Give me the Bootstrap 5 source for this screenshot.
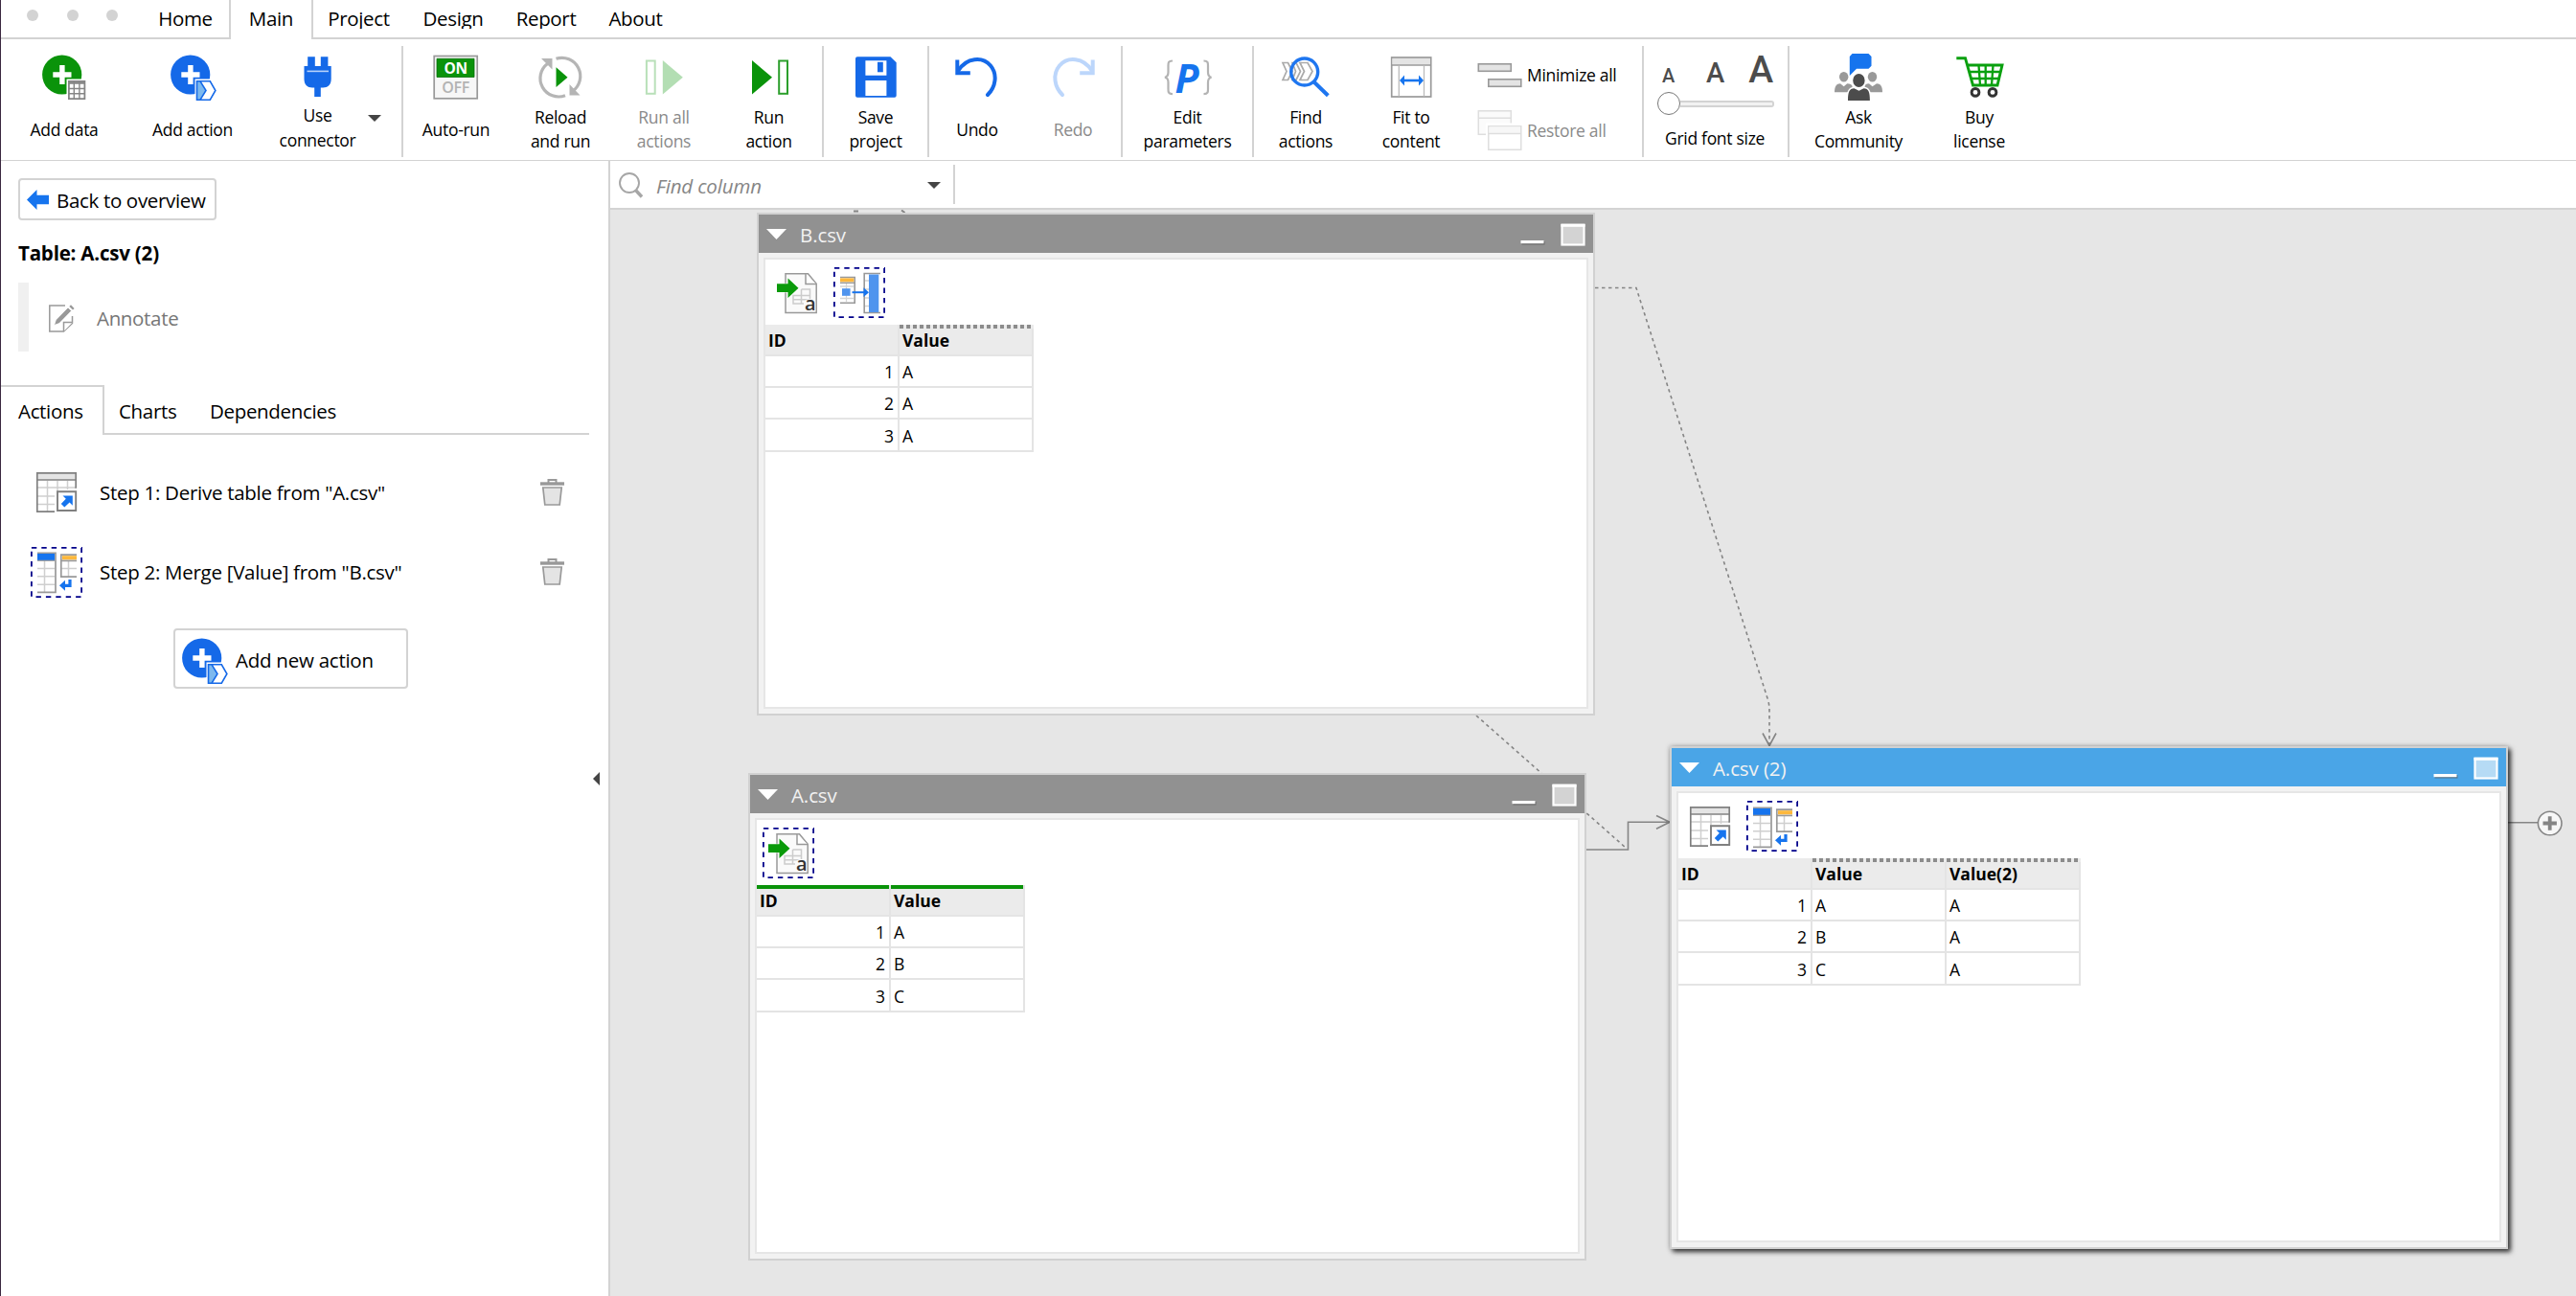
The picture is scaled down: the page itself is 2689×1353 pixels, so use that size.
<!DOCTYPE html>
<html lang="en">
<head>
<meta charset="utf-8">
<title>Project editor</title>
<link rel="stylesheet" href="https://cdn.jsdelivr.net/npm/bootstrap@5.3.0/dist/css/bootstrap.min.css">
<style>
:root{--edge:#d3d3d3}
html,body{height:100%}
body{font-family:"Open Sans","Noto Sans",sans-serif;font-size:20.5px;letter-spacing:-.33px;color:#000;line-height:30px;background:#fff;overflow:hidden}
svg{overflow:visible;flex:none}
.app{height:1353px;border-left:1px solid #3a2840}

/* top tabs */
.topbar{height:41px;flex:none}
.win-dots{width:147px;border-bottom:2px solid var(--edge);padding:10px 0 0 27px;gap:29.5px}
.win-dots i{width:12px;height:12px;border-radius:50%;background:var(--edge)}
.top-tab{border-bottom:2px solid var(--edge);text-align:center;color:#000}
.top-tab span{display:block;line-height:39px;clip-path:inset(0 0 9px 0)}
.top-tab.active{border:2px solid var(--edge);border-width:0 2px}
.tw-91{width:91px}.tw-92{width:92px}.tw-88{width:88px}.tw-95{width:95px}.tw-102{width:102px}

/* ribbon */
.ribbon{height:127px;flex:none;border-bottom:1px solid var(--edge);font-size:17.5px;letter-spacing:-.3px;line-height:25px;padding-top:7px}
.rule{width:2px;height:116px;background:var(--edge)}
.tool{text-align:center;padding-top:8px}
.tool svg{width:48px;height:48px}
.tool-label{height:62px;display:flex;align-items:center;justify-content:center}
.off{color:#8a8a8a}
.w100{width:100px}.w108{width:108px}.w110{width:110px}.w111{width:111px}.w112{width:112px}
.w132{width:132px}.w135{width:135px}.w136{width:136px}.w144{width:144px}
.w-use{width:125px}.use-lines{line-height:25.6px;padding-bottom:3px}
.caret-drop{width:0;margin:61px 35px 0 -10px}
.wins{width:185px;padding-left:13px}
.wins>div{gap:5px}
.wins span{margin-top:-4px}
.font-size-tool{width:150px;padding:9px 13px 0 19px}
.letters{height:29px;line-height:1;color:#4c4c4c;font-family:Roboto,sans-serif;font-weight:500;letter-spacing:0;width:116px}
.letters span{line-height:.86}
.l-s{font-size:20px}.l-m{font-size:29px}.l-l{font-size:39px}
.slider{height:24px;margin:10px 0 0 -5px;width:122px}
.slider b{width:24px;height:24px;border:1.5px solid #777;border-radius:50%;background:#fff}
.slider i{height:7px;flex:1;border:2px solid var(--edge);border-left:0;border-radius:0 3px 3px 0;background:#f2f2f2}
.slider-name{margin:12px 0 0 3px;white-space:nowrap}

/* side panel */
.side{width:636px;border-right:2px solid var(--edge);padding-top:18px}
.line-btn{border:2px solid var(--edge);border-radius:4px;background:#fff}
.back{width:207px;height:44px;margin-left:18px;padding:1px 0 0 7px;gap:8px}
.side-title{font-weight:700;letter-spacing:-.2px;margin:19px 0 0 18px}
.note{margin:16px 0 0 18px;height:72px;width:580px;border-left:11px solid #f0f0f0;color:#767676;padding:2px 0 0 21px;gap:23px}
.side-tabs{margin-top:35px;height:52px;width:614px}
.side-tabs>span{line-height:50px;border-bottom:2px solid var(--edge);padding-top:2px}
.side-tabs .active{width:108px;padding:0 0 0 18px;border:2px solid var(--edge);border-width:2px 2px 0 0}
.st-b{padding-left:15px;width:92px}.st-c{padding-left:18px}
.steps{margin:33px 46px 0 31px;gap:29px}
.step{height:54px}
.step-name{margin-left:18px;letter-spacing:-.28px}
.add-new{width:245px;height:63px;margin:32px 0 0 180px;padding:2px 0 0 6px;gap:9px;letter-spacing:-.25px}
.collapser{left:617px;top:638px}

/* search strip */
.find{height:51px;border-bottom:2px solid var(--edge);padding-top:4px}
.find-box{width:360px;height:41px;border-right:2px solid var(--edge);padding:1px 13px 0 9px;font-style:italic;color:#858585;letter-spacing:-.15px}
.find-box span{margin:1px 0 0 14px;flex:1}

/* canvas */
.board{background:#e6e6e6;flex:1;overflow:hidden}
.wires{left:-637px;top:-219px}
.win{position:absolute;border:2px solid #d1d1d1;background:#f2f2f2;display:flex;flex-direction:column}
.win-b{left:153px;top:3px;width:875px;height:525px}
.win-a{left:144px;top:588px;width:875px;height:509px}
.win-c{left:1106px;top:560px;width:875px;height:525px;box-shadow:3px 3px 5px rgba(0,0,0,.75),0 0 5px rgba(0,0,0,.25)}
.win-head{height:40px;background:#919191;color:#f2f2f2;padding:1px 8px 0 8px;letter-spacing:-.1px;flex:none}
.win-c .win-head{background:#4aa5e7}
.win-head .nm{margin-left:14px;padding-top:1px}
.win-body{flex:1;margin:5px;border:2px solid #e6e6e6;background:#fff}
.strip{height:68px;padding:8px 0 0 6px;gap:11px}
.cellbox{width:54px;height:53px;display:flex;align-items:center;justify-content:center}
.cellbox svg{width:48px;height:48px}
.grid{table-layout:fixed;border-collapse:separate;border-spacing:0;font-size:17.5px;letter-spacing:0;line-height:30px;width:280px}
.grid.g3{width:420px}
.grid th,.grid td{height:33px;padding:1px 2px 0 3px;border:0 solid #e4e4e4;border-width:0 2px 2px 0}
.grid tr:last-child td{padding-top:2px;height:34px}
.grid th{background:#ebebeb;position:relative}
.grid td:first-child{text-align:right;padding-right:4px}
.grid th.dots::before{content:"";position:absolute;left:0;right:-2px;top:0;height:4px;background:repeating-linear-gradient(90deg,#8c8c8c 0 4px,#ebebeb 4px 7px)}
.grid th.solid::before{content:"";position:absolute;left:0;right:0;top:0;height:4px;background:#0a930a}
</style>
<script src="https://cdn.jsdelivr.net/npm/bootstrap@5.3.0/dist/js/bootstrap.bundle.min.js"></script>
</head>
<body>
<svg width="0" height="0" class="position-absolute">
  <defs>
    <symbol id="i-addaction" viewBox="0 0 48 48" overflow="visible">
      <circle cx="21.7" cy="22" r="20.6" fill="#1569e8"/>
      <path d="M21.9 12v20M12.3 22h19.2" stroke="#fff" stroke-width="5.4"/>
      <path d="M26.5 26.5h16.5l7 12-7 12h-16.5z" fill="#fff"/>
      <path d="M28.5 28.8h13.8l5.6 9.7-5.6 9.7H28.500z" fill="#7db9ee"/>
      <path d="M32 28.800h10.300l5.600 9.700-5.600 9.700H32l6-9.700z" fill="#fff"/>
      <path d="M28.500 28.800h13.800l5.600 9.700-5.600 9.700H28.500zM32 28.800l6 9.700-6 9.700" fill="none" stroke="#1569e8" stroke-width="1.600"/>
    </symbol>
    <symbol id="i-derive" viewBox="0 0 48 48">
      <path d="M3.800 3.800h40.400v7H3.800z" fill="#e4e4e4"/>
      <path d="M14.500 12v32M25 12v12M35.500 12v9M4 19h40M4 28h18M4 36.500h18" stroke="#cfcfcf" stroke-width="1.500" fill="none"/>
      <path d="M22 44.200H3.800V3.800h40.400v16" fill="none" stroke="#808080" stroke-width="1.700"/>
      <path d="M3.800 11h40.400" stroke="#808080" stroke-width="1.500"/>
      <path d="M25 23.300h19.200v19.700H25z" fill="#fff" stroke="#808080" stroke-width="1.900"/>
      <path d="M30.500 27.500h10.300v10.200l-3.200-3.200-5.300 5-3.500-3.400 5-5.300z" fill="#1674ee"/>
    </symbol>
    <symbol id="i-merge" viewBox="0 0 48 48">
      <path d="M11.500 12v33M4 20.500h18M4 28.800h18M4 37.200h18" stroke="#cfcfcf" stroke-width="1.500"/>
      <path d="M4 4.300h19v41H4" fill="none" stroke="#999" stroke-width="1.700"/>
      <path d="M4 5h18v7H4z" fill="#1674ee"/>
      <path d="M4 12.300h18" stroke="#999" stroke-width="1.200"/>
      <path d="M36.500 12v17M29 20.500h16" stroke="#cfcfcf" stroke-width="1.500"/>
      <path d="M45 6.200H28.800v23H45M29 12.300h16" fill="none" stroke="#999" stroke-width="1.700"/>
      <path d="M30 7.200h15v4H30z" fill="#fdb83c"/>
      <path d="M38 32v6.300h-6" fill="none" stroke="#1674ee" stroke-width="3.200"/>
      <path d="M27 38.300l6-5.500v11z" fill="#1674ee"/>
    </symbol>
    <symbol id="i-import" viewBox="0 0 48 48">
      <path d="M12 3.700h23.500l8.700 10.600v30.200H12z" fill="#fafafa" stroke="#999" stroke-width="1.500"/>
      <path d="M33 4v10.500h11" fill="#fff" stroke="#999" stroke-width="1.500"/>
      <path d="M28.500 20h9v6.500H20v8.500h11M28.500 20v15M20 30.700h17.500v-4" fill="none" stroke="#ccc" stroke-width="1.500"/>
      <path d="M3 14.300h11.500V8.500l11 10.200-11 10.200v-6H3z" fill="#0a9a0a" stroke="#fff" stroke-width="1" paint-order="stroke"/>
      <text x="32" y="41.500" font-family="Open Sans, sans-serif" font-size="20" font-weight="600" fill="#333" stroke="#fafafa" stroke-width="2" paint-order="stroke">a</text>
    </symbol>
    <symbol id="i-move" viewBox="0 0 48 48">
      <path d="M4 17h14M4 29.500h14M10.500 13v20" stroke="#d5d5d5" stroke-width="1.300"/>
      <path d="M4 7.500h15.200v26.700H4M4 13.200h15" fill="none" stroke="#999" stroke-width="1.600"/>
      <path d="M4 8.400h14.300v3.800H4z" fill="#fdb83c"/>
      <path d="M6 19.200h8.600v7.600H6z" fill="#4f94ee"/>
      <path d="M46 3.500H29.200v41H46" fill="none" stroke="#999" stroke-width="1.600"/>
      <path d="M30 11h4M30 20h4M30 29h4M30 37.500h4" stroke="#d5d5d5" stroke-width="1.300"/>
      <path d="M34 4.500h10.300v39.500H34z" fill="#4f94ee"/>
      <path d="M16.500 23.200h13" stroke="#1674ee" stroke-width="2"/>
      <path d="M28.500 18.300l5.500 4.900-5.500 4.900z" fill="#1674ee"/>
    </symbol>
    <symbol id="i-frame" viewBox="0 0 54 53">
      <rect x=".9" y=".9" width="52.200" height="51.200" fill="none" stroke="#00008b" stroke-width="1.800" stroke-dasharray="5.400 5"/>
    </symbol>
    <symbol id="i-trash" viewBox="0 0 25 28">
      <path d="M8.500 4V1h8v3" fill="none" stroke="#999" stroke-width="2"/>
      <path d="M0 3.300h25v3.400H0z" fill="#999"/>
      <path d="M2.800 9h19.400l-2 18H4.800z" fill="#e4e4e4" stroke="#999" stroke-width="1.700"/>
    </symbol>
    <symbol id="i-winmin" viewBox="0 0 26 6"><path d="M1.500 2h24v3.500h-24z" fill="#555" opacity=".6"/><path d="M.5 1h24v3.200H.5z" fill="#fff"/></symbol>
    <symbol id="i-winmax" viewBox="0 0 26 24"><rect x="1.500" y="2" width="23" height="20.500" fill="#fff" fill-opacity=".6" stroke="#fff" stroke-width="2.200"/><path d="M.5 2.200h25" stroke="#fff" stroke-width="3.200"/></symbol>
  </defs>
</svg>

<div class="app d-flex flex-column">
  <nav class="topbar d-flex">
    <div class="win-dots d-flex"><i></i><i></i><i></i></div>
    <div class="top-tab tw-91"><span>Home</span></div>
    <div class="top-tab tw-88 active"><span>Main</span></div>
    <div class="top-tab tw-95"><span>Project</span></div>
    <div class="top-tab tw-102"><span>Design</span></div>
    <div class="top-tab tw-92"><span>Report</span></div>
    <div class="top-tab tw-95"><span>About</span></div>
    <div class="top-tab flex-fill"></div>
  </nav>

  <div class="ribbon d-flex">
    <div class="tool w132">
      <svg viewBox="0 0 48 48"><circle cx="21.700" cy="22" r="20.600" fill="#0a930a"/><path d="M21.900 12v20M12.300 22h19.200" stroke="#fff" stroke-width="5.400"/><path d="M26.500 26.500h21v23h-21z" fill="#fff"/><path d="M28.900 28.900h16.500v18.200H28.900z" fill="#fff" stroke="#858585" stroke-width="1.800"/><path d="M28 30.500h18" stroke="#858585" stroke-width="2.500"/><path d="M34.300 29v18M39.900 29v18M29 36.500h16.500M29 41.800h16.500" stroke="#858585" stroke-width="1.400"/></svg>
      <div class="tool-label">Add data</div>
    </div>
    <div class="tool w136">
      <svg><use href="#i-addaction"/></svg>
      <div class="tool-label">Add action</div>
    </div>
    <div class="tool w-use">
      <svg viewBox="0 0 48 48"><path d="M13.200 3.300h7.600V13h6V3.300h7.600V13h3.300v13.500c0 6-3.500 9-8.500 9h-2.400V45h-6.600v-9.500h-2.200c-5 0-8.500-3-8.500-9V13h3.700z" fill="#1569e8"/><path d="M12.500 18.400h22.500" stroke="#b8d2fa" stroke-width="1.600"/></svg>
      <div class="tool-label use-lines">Use<br>connector</div>
    </div>
    <div class="caret-drop"><svg width="14" height="7"><path d="M0 0h14l-7 7z" fill="#444"/></svg></div>
    <div class="rule"></div>
    <div class="tool w110">
      <svg viewBox="0 0 48 48"><rect x="1.200" y="2.500" width="45" height="44.300" fill="#f7f7f7" stroke="#999" stroke-width="1.700"/><path d="M4 5.300h39v19.200H4z" fill="#0a930a" stroke="#07700a" stroke-width=".8"/><text x="23.700" y="20.600" text-anchor="middle" font-size="15.500" font-weight="700" fill="#fff">ON</text><text x="23.700" y="40.700" text-anchor="middle" font-size="16" font-weight="600" fill="#b3b3b3">OFF</text></svg>
      <div class="tool-label">Auto-run</div>
    </div>
    <div class="tool w108">
      <svg viewBox="0 0 48 48" fill="none" stroke="#b5b5b5" stroke-width="3.200"><path d="M19.500 5.300a19.200 19.200 0 0 1 17 34M29 43.700A19.200 19.200 0 0 1 10.500 10.500"/><path d="M4 5h11.500v11.500z M44.500 43.500H33.500V32z" fill="#b5b5b5" stroke="none"/><path d="M19.500 14.300L31.500 24.700 19.500 35z" fill="#0a930a" stroke="none"/></svg>
      <div class="tool-label">Reload<br>and run</div>
    </div>
    <div class="tool w108 off">
      <svg viewBox="0 0 48 48"><rect x="5.900" y="7.500" width="8.800" height="34.300" fill="none" stroke="#b9e0b9" stroke-width="2"/><path d="M22.800 7l21 17.700-21 17.700z" fill="#b3deb3"/></svg>
      <div class="tool-label">Run all<br>actions</div>
    </div>
    <div class="tool w111">
      <svg viewBox="0 0 48 48"><rect x="34.200" y="7.500" width="8.800" height="34.300" fill="none" stroke="#2c9f2c" stroke-width="2"/><path d="M6 7l21 17.700L6 42.400z" fill="#0a930a"/></svg>
      <div class="tool-label">Run<br>action</div>
    </div>
    <div class="rule"></div>
    <div class="tool w108">
      <svg viewBox="0 0 48 48"><path d="M5 3.300h34.500l6.200 6v34.500a2 2 0 0 1-2 2H5a2 2 0 0 1-2-2v-38.500a2 2 0 0 1 2-2z" fill="#1569e8"/><path d="M13.400 7.300h22v15.500h-22zM13.400 28h22v16h-22z" fill="#fff"/><path d="M26 8.800h5.800v10.500H26z" fill="#1569e8"/></svg>
      <div class="tool-label">Save<br>project</div>
    </div>
    <div class="rule"></div>
    <div class="tool w100">
      <svg viewBox="0 0 48 48" fill="none" stroke="#1569e8" stroke-width="4"><path d="M4.500 17.500C13 4 29.500 2.500 38 12.500c7.500 9 5.500 22-3 30.500" stroke-linecap="round"/><path d="M3.300 6.500v13.700h13.500"/></svg>
      <div class="tool-label">Undo</div>
    </div>
    <div class="tool w100 off">
      <svg viewBox="0 0 48 48" fill="none" stroke="#bcd6fb" stroke-width="4"><path d="M43.500 17.500C35 4 18.500 2.500 10 12.500c-7.500 9-5.500 22 3 30.500" stroke-linecap="round"/><path d="M44.700 6.500v13.700H31.200"/></svg>
      <div class="tool-label">Redo</div>
    </div>
    <div class="rule"></div>
    <div class="tool w135">
      <svg viewBox="0 0 48 48"><path d="M8 7.500c-4.500 0-4.500 2-4.500 5v7c0 3-.5 4.500-3.500 5.200 3 .7 3.500 2.300 3.500 5.200v7c0 3 0 5.300 4.500 5.300M40.500 7.500c4.500 0 4.500 2 4.500 5v7c0 3 .5 4.500 3.500 5.200-3 .7-3.500 2.300-3.500 5.200v7c0 3 0 5.300-4.500 5.300" fill="none" stroke="#b3b3b3" stroke-width="2.200"/><text x="10.500" y="40.500" font-size="41" font-weight="700" font-style="italic" fill="#1674ee">P</text></svg>
      <div class="tool-label">Edit<br>parameters</div>
    </div>
    <div class="rule"></div>
    <div class="tool w108">
      <svg viewBox="0 0 48 48" fill="none"><path d="M0 9.500h5.500l4.500 9-4.500 9H0l4-9zM10 9.500h4l4.500 9-4.500 9h-4l3.500-9zM18 9.500h8l5 9-5 9h-8l4.500-9z" stroke="#aaa" stroke-width="1.700"/><circle cx="22.700" cy="19" r="14" stroke="#1e76f0" stroke-width="3.400"/><path d="M32.800 29.800l14.500 14" stroke="#1e76f0" stroke-width="4"/></svg>
      <div class="tool-label">Find<br>actions</div>
    </div>
    <div class="tool w112">
      <svg viewBox="0 0 48 48"><rect x="3.700" y="4" width="41" height="41" fill="#fff" stroke="#999" stroke-width="1.700"/><path d="M4.500 5h39.500v6.500H4.500z" fill="#e4e4e4"/><path d="M3.700 12h41" stroke="#999" stroke-width="1.700"/><path d="M11.300 12.500v32M37.500 12.500v32" stroke="#bbb" stroke-width="1.300"/><path d="M15 28h19" stroke="#1674ee" stroke-width="2.600"/><path d="M12 28l5-5.500v11zM37 28l-5-5.500v11z" fill="#1674ee"/></svg>
      <div class="tool-label">Fit to<br>content</div>
    </div>
    <div class="wins">
      <div class="d-flex align-items-center mt-3 pt-1">
        <svg width="47" height="25"><g fill="#e4e4e4" stroke="#999" stroke-width="1.600"><rect x="1.300" y="-1.200" width="34" height="7.500"/><rect x="11.800" y="14.800" width="34" height="7.500"/></g></svg>
        <span>Minimize all</span>
      </div>
      <div class="d-flex align-items-center mt-4 off">
        <svg width="47" height="42"><g transform="translate(0 -2)" fill="#fbfbfb" stroke="#dedede" stroke-width="1.500"><rect x="1.300" y=".8" width="34" height="24.500"/><path d="M1 8.300h34"/><path d="M9 13.500h40v30H9z" fill="#fff" stroke="none"/><rect x="11.800" y="16.800" width="34" height="24.500" fill="#fff"/><path d="M12.500 17.500h32.500v6.500H12.500z" stroke="none" fill="#f7f7f7"/><path d="M11.500 24.500h34.500"/></g></svg>
        <span>Restore all</span>
      </div>
    </div>
    <div class="rule"></div>
    <div class="font-size-tool">
      <div class="letters d-flex align-items-baseline justify-content-between"><span class="l-s">A</span><span class="l-m ps-2">A</span><span class="l-l">A</span></div>
      <div class="slider d-flex align-items-center"><b></b><i></i></div>
      <div class="slider-name">Grid font size</div>
    </div>
    <div class="rule"></div>
    <div class="tool w144">
      <svg viewBox="0 0 48 48"><path d="M17.500 0h17l3 3v9.700l-3 3H22l-7.200 7.300V3z" fill="#1674ee"/><g fill="#999"><ellipse cx="8.700" cy="24.300" rx="4.700" ry="5.300"/><ellipse cx="38.500" cy="24.300" rx="4.700" ry="5.300"/><path d="M-1 40.300c0-6 2-9 6-9l3.700 3 3.500-3c3 0 5 1 5.500 3l-3 6zM49 40.300c0-6-2-9-6-9l-4.500 3-3.500-3c-3 0-4 1-4.500 3l2.500 6z"/></g><g fill="#4c4c4c" stroke="#fff" stroke-width="3" paint-order="stroke"><path d="M13 49c0-9 1.500-12.500 6.500-12.700l5 2.500 5-2.500c5 .2 6.400 3.700 6.400 12.700z"/><ellipse cx="24.400" cy="28" rx="6.200" ry="7"/></g></svg>
      <div class="tool-label">Ask<br>Community</div>
    </div>
    <div class="tool w108">
      <svg viewBox="0 0 48 48" fill="none"><path d="M.3 4.700h9.200L17.500 33h25.500l5-21H12" stroke="#0aa00f" stroke-width="2.900"/><path d="M13.500 19h33M15.500 26h29.500M23.500 12l1.500 21M30.700 12v21M38.500 12l-1.500 21" stroke="#0aa00f" stroke-width="2.300"/><g stroke="#333" stroke-width="2.900"><circle cx="20" cy="40.400" r="3.900"/><circle cx="38" cy="40.400" r="3.900"/></g></svg>
      <div class="tool-label">Buy<br>license</div>
    </div>
  </div>

  <div class="d-flex flex-fill position-relative">
    <aside class="side flex-shrink-0">
      <div class="line-btn back d-flex align-items-center"><svg width="23" height="21"><path d="M0 10.500L10.500 0v5.700H23v9.600H10.500V21z" fill="#1674ee"/></svg>Back to overview</div>
      <div class="side-title">Table: A.csv (2)</div>
      <div class="note d-flex align-items-center">
        <svg width="27" height="29" fill="none" stroke="#999" stroke-width="1.500"><path d="M17 1H.8v27h14.700l9-8.500V12"/><path d="M15.500 28v-9.500h9" fill="#fff"/><path d="M5.500 21.500l1.800-5.500L20 3l3.600 3.600-12.700 13z" fill="#999" stroke="#fff" stroke-width=".8"/><path d="M21.300 1.900l1.700-1.600 3.600 3.600-1.600 1.700z" fill="#999" stroke="none"/></svg>
        Annotate
      </div>
      <div class="side-tabs d-flex">
        <span class="active">Actions</span><span class="st-b">Charts</span><span class="st-c flex-fill">Dependencies</span>
      </div>
      <div class="steps d-flex flex-column">
        <div class="step d-flex align-items-center">
          <div class="cellbox"><svg><use href="#i-derive"/></svg></div>
          <span class="step-name flex-fill">Step 1: Derive table from "A.csv"</span>
          <svg width="25" height="28"><use href="#i-trash"/></svg>
        </div>
        <div class="step d-flex align-items-center">
          <div class="cellbox position-relative"><svg><use href="#i-merge"/></svg><svg class="position-absolute start-0 top-0 w-100 h-100"><use href="#i-frame"/></svg></div>
          <span class="step-name flex-fill">Step 2: Merge [Value] from "B.csv"</span>
          <svg width="25" height="28"><use href="#i-trash"/></svg>
        </div>
      </div>
      <div class="line-btn add-new d-flex align-items-center"><svg width="48" height="48"><use href="#i-addaction"/></svg>Add new action</div>
      <svg class="collapser position-absolute" width="8" height="14"><path d="M8 0v14L1 7z" fill="#444"/></svg>
    </aside>

    <main class="d-flex flex-column flex-fill">
      <div class="find">
        <div class="find-box d-flex align-items-center">
          <svg width="25" height="27" fill="none" stroke="#a6a6a6"><circle cx="11" cy="11" r="10" stroke-width="1.900"/><path d="M17.500 18.500l6.500 7" stroke-width="3.400"/></svg>
          <span>Find column</span>
          <svg width="14" height="7"><path d="M0 0h14l-7 7z" fill="#444"/></svg>
        </div>
      </div>
      <div class="board position-relative">
        <svg class="wires position-absolute" width="2689" height="1353" fill="none" stroke="#858585" stroke-width="1.600">
          <path d="M891 220.500h5M941 219.500l3.500 2.500" stroke-width="2"/>
          <g stroke-dasharray="3.500 3.500">
            <path d="M1665 300.500h43L1845 729q2 6 2 12v36"/>
            <path d="M1541 747L1697 885"/>
          </g>
          <path d="M1840 765.500l7 13 7-13M1656 887h43.500v-28.700H1743M1729 851.500l14 6.800-14 7M2618 858.700h31"/>
          <circle cx="2661.700" cy="859.500" r="12.300" fill="#f7f7f7"/>
          <path d="M2654.500 859.500h14.400M2661.700 852.300v14.400" stroke-width="3.800"/>
        </svg>

        <section class="win win-b">
          <header class="win-head d-flex align-items-center">
            <svg width="21" height="11"><path d="M0 0h21L10.500 11z" fill="#fff"/></svg><span class="nm flex-fill">B.csv</span>
            <svg class="mt-3 me-3" width="26" height="6"><use href="#i-winmin"/></svg><svg width="26" height="24"><use href="#i-winmax"/></svg>
          </header>
          <div class="win-body">
            <div class="strip d-flex">
              <div class="cellbox"><svg><use href="#i-import"/></svg></div>
              <div class="cellbox position-relative"><svg><use href="#i-move"/></svg><svg class="position-absolute start-0 top-0 w-100 h-100"><use href="#i-frame"/></svg></div>
            </div>
            <table class="grid">
              <tr><th>ID</th><th class="dots">Value</th></tr>
              <tr><td>1</td><td>A</td></tr><tr><td>2</td><td>A</td></tr><tr><td>3</td><td>A</td></tr>
            </table>
          </div>
        </section>

        <section class="win win-a">
          <header class="win-head d-flex align-items-center">
            <svg width="21" height="11"><path d="M0 0h21L10.500 11z" fill="#fff"/></svg><span class="nm flex-fill">A.csv</span>
            <svg class="mt-3 me-3" width="26" height="6"><use href="#i-winmin"/></svg><svg width="26" height="24"><use href="#i-winmax"/></svg>
          </header>
          <div class="win-body">
            <div class="strip d-flex">
              <div class="cellbox position-relative"><svg><use href="#i-import"/></svg><svg class="position-absolute start-0 top-0 w-100 h-100"><use href="#i-frame"/></svg></div>
            </div>
            <table class="grid">
              <tr><th class="solid">ID</th><th class="solid">Value</th></tr>
              <tr><td>1</td><td>A</td></tr><tr><td>2</td><td>B</td></tr><tr><td>3</td><td>C</td></tr>
            </table>
          </div>
        </section>

        <section class="win win-c">
          <header class="win-head d-flex align-items-center">
            <svg width="21" height="11"><path d="M0 0h21L10.500 11z" fill="#fff"/></svg><span class="nm flex-fill">A.csv (2)</span>
            <svg class="mt-3 me-3" width="26" height="6"><use href="#i-winmin"/></svg><svg width="26" height="24"><use href="#i-winmax"/></svg>
          </header>
          <div class="win-body">
            <div class="strip d-flex">
              <div class="cellbox"><svg><use href="#i-derive"/></svg></div>
              <div class="cellbox position-relative"><svg><use href="#i-merge"/></svg><svg class="position-absolute start-0 top-0 w-100 h-100"><use href="#i-frame"/></svg></div>
            </div>
            <table class="grid g3">
              <tr><th>ID</th><th class="dots">Value</th><th class="dots">Value(2)</th></tr>
              <tr><td>1</td><td>A</td><td>A</td></tr><tr><td>2</td><td>B</td><td>A</td></tr><tr><td>3</td><td>C</td><td>A</td></tr>
            </table>
          </div>
        </section>
      </div>
    </main>
  </div>
</div>
</body>
</html>
